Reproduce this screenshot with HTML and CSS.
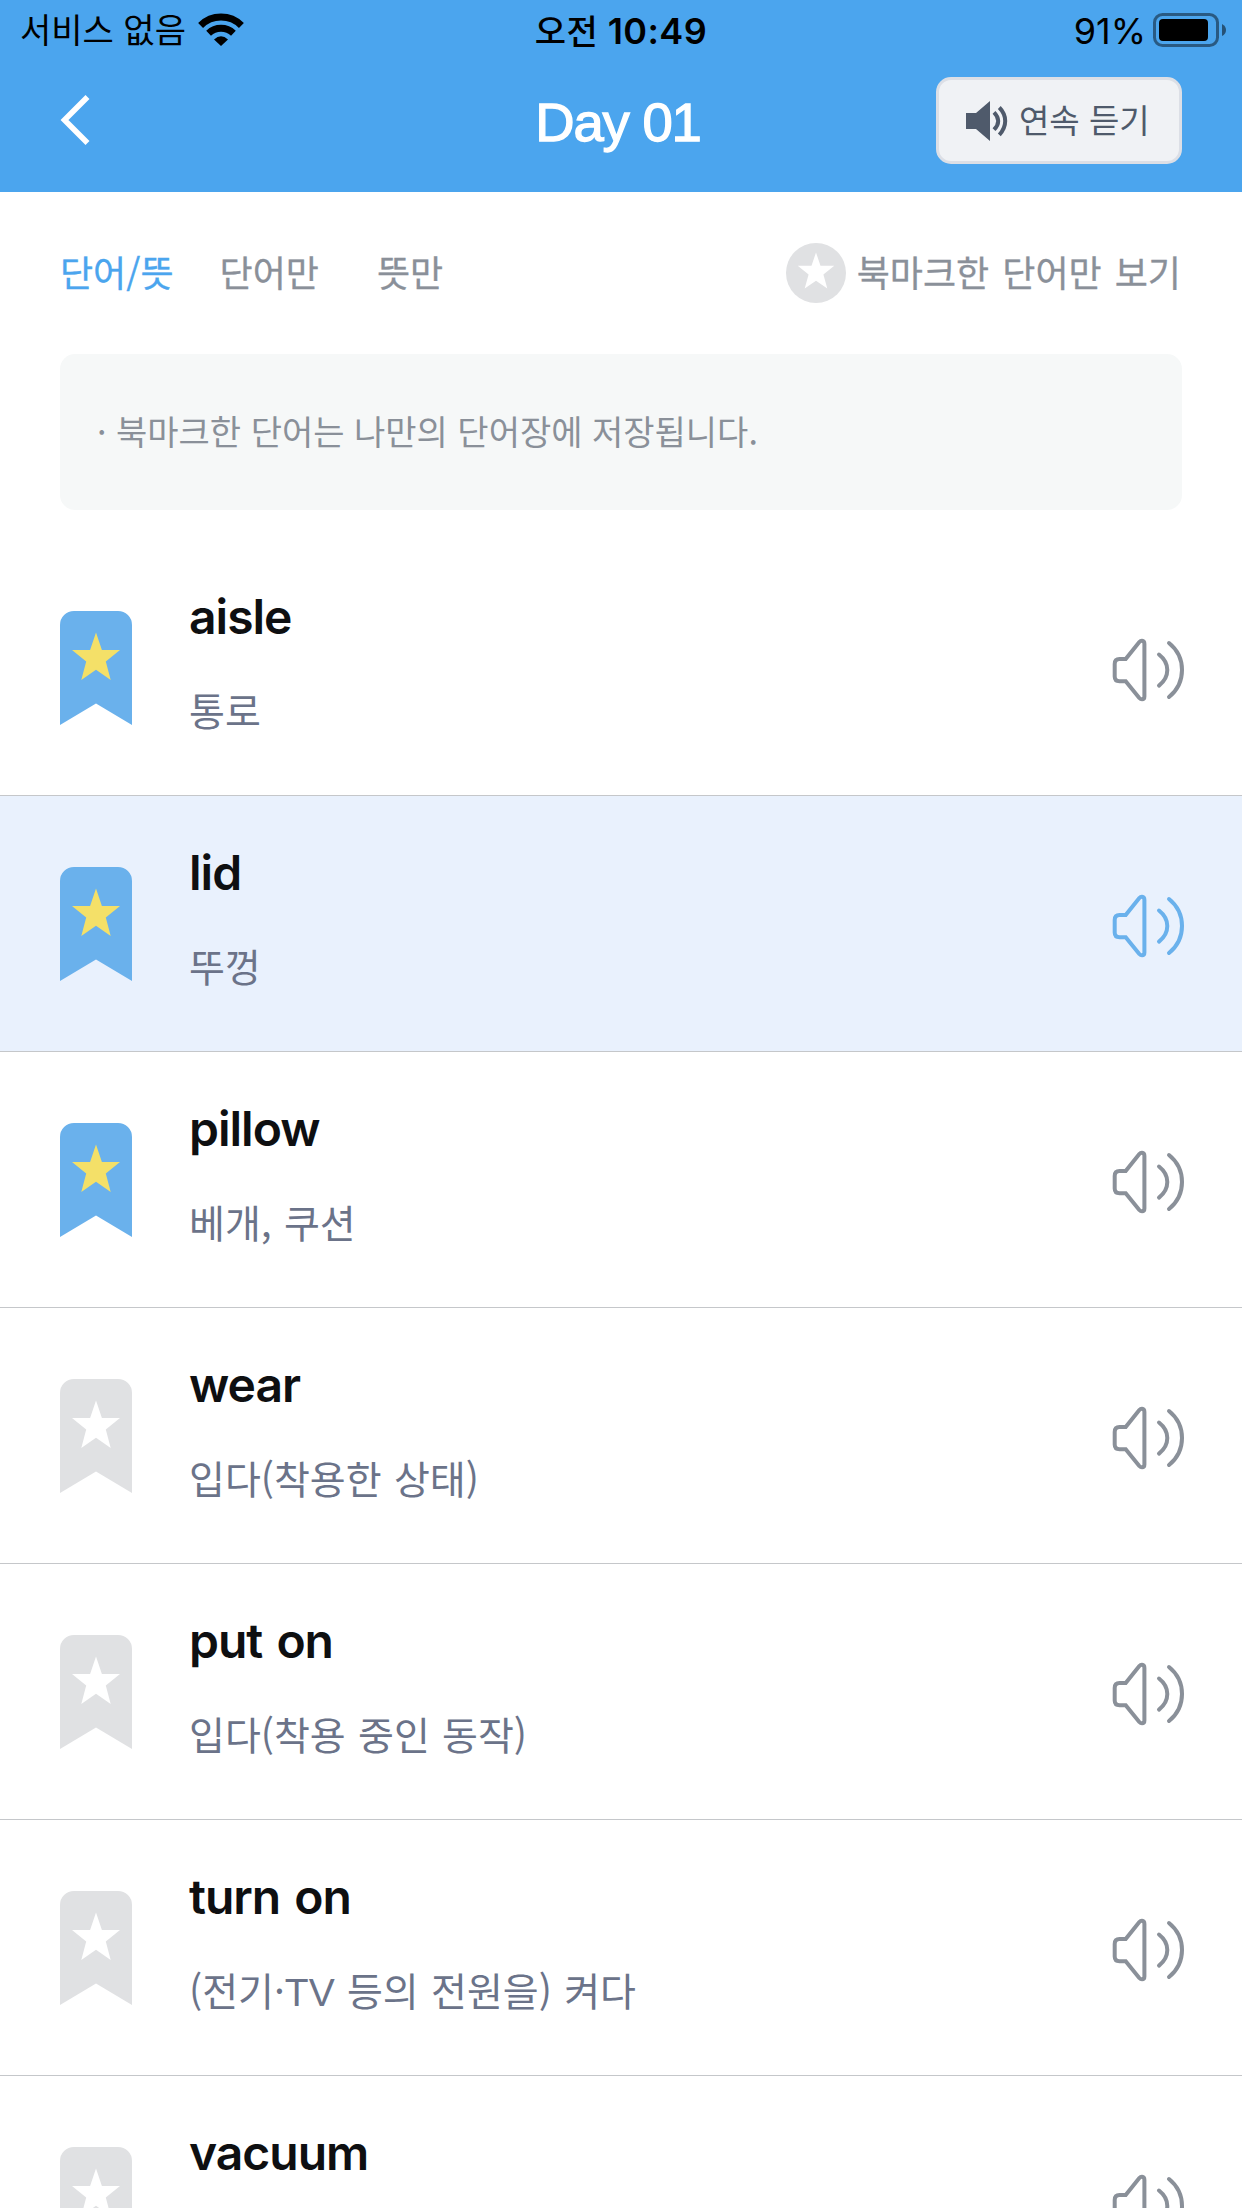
FILE: index.html
```html
<!DOCTYPE html>
<html lang="ko">
<head>
  <meta charset="UTF-8">
  <title>Day 01</title>
  <link rel="stylesheet" href="styles.css">
</head>
<body>

<!-- shared icons -->
<svg class="sprite" width="0" height="0">
  <symbol id="bookmark" viewBox="0 0 72 114">
    <path d="M0 14A14 14 0 0 1 14 0H58A14 14 0 0 1 72 14V114L36 92.6L0 114Z"/>
    <path class="star" d="M36 21.5L41.9 39H60L45.8 50.5L50.7 69L36 58.8L21.3 69L26.2 50.5L12 39H30.1Z"/>
  </symbol>
  <symbol id="speaker" viewBox="0 0 76 68">
    <path d="M15.7 23H9.5Q4.7 23 4.7 28V40.5Q4.7 45.3 9.5 45.3H15.7L29.3 62Q30.5 63.3 32 63.3Q34.4 63.2 34.4 60.5V8Q34.4 5 32 4.8Q30.5 4.7 29.3 6Z"/>
    <path d="M49 18.5Q57.3 25 57.3 34T49 49.6"/>
    <path d="M59 7Q72 17.5 72 34T59 61"/>
  </symbol>
</svg>

<header class="header">
  <div class="status">
    <div class="status-left">
      <span class="carrier">서비스 없음</span>
      <svg class="wifi" width="46" height="34" viewBox="0 0 46 34">
        <path d="M2.6 12.4A29 29 0 0 1 43.4 12.4" fill="none" stroke="#000" stroke-width="7"/>
        <path d="M10.6 20.3A17.8 17.8 0 0 1 35.4 20.3" fill="none" stroke="#000" stroke-width="6.8"/>
        <path d="M16 26.4Q23 20 30 26.4L23 33Z"/>
      </svg>
    </div>
    <div class="time"><span>오전</span> 10:49</div>
    <div class="status-right">
      <span>91%</span>
      <svg class="battery" width="74" height="34" viewBox="0 0 74 34">
        <rect x="1.5" y="1.5" width="63" height="31" rx="8" fill="none" stroke="#000" stroke-opacity=".45" stroke-width="3"/>
        <rect x="6" y="6" width="49" height="22" rx="4"/>
        <path d="M69 11Q73 13 73 17T69 23Z" fill-opacity=".5"/>
      </svg>
    </div>
  </div>
  <div class="nav">
    <svg class="back" width="32" height="54" viewBox="0 0 32 54">
      <path d="M27.5 4L4.5 27L27.5 50" fill="none" stroke="#fff" stroke-width="5.6"/>
    </svg>
    <h1>Day 01</h1>
    <button class="listen">
      <svg width="42" height="40" viewBox="0 0 42 40">
        <path d="M0 12H10L24 0V40L10 28H0Z" fill="#4f5a6b"/>
        <path d="M28 11.3Q32.2 15.5 32.2 20T28 28.7M33.3 6.5Q39.2 12.5 39.2 20T33.3 33.8" fill="none" stroke="#4f5a6b" stroke-width="4"/>
      </svg>
      <span>연속 듣기</span>
    </button>
  </div>
</header>

<div class="filters">
  <div class="tabs">
    <a class="tab active">단어/뜻</a>
    <a class="tab">단어만</a>
    <a class="tab">뜻만</a>
  </div>
  <div class="only-marked">
    <svg width="60" height="60" viewBox="0 0 60 60">
      <circle cx="30" cy="30" r="30" fill="#e0e1e3"/>
      <path d="M30 9.5L34.5 22.8H48.3L37.4 31.5L41.3 45.5L30 37.7L18.7 45.5L22.6 31.5L11.7 22.8H25.5Z" fill="#fff"/>
    </svg>
    <span>북마크한 단어만 보기</span>
  </div>
</div>

<div class="notice">· 북마크한 단어는 나만의 단어장에 저장됩니다.</div>

<ul class="words">
  <li class="row marked">
    <svg class="bookmark"><use href="#bookmark"/></svg>
    <div class="text"><h2>aisle</h2><p>통로</p></div>
    <svg class="speaker"><use href="#speaker"/></svg>
  </li>
  <li class="row marked playing">
    <svg class="bookmark"><use href="#bookmark"/></svg>
    <div class="text"><h2>lid</h2><p>뚜껑</p></div>
    <svg class="speaker"><use href="#speaker"/></svg>
  </li>
  <li class="row marked">
    <svg class="bookmark"><use href="#bookmark"/></svg>
    <div class="text"><h2>pillow</h2><p>베개, 쿠션</p></div>
    <svg class="speaker"><use href="#speaker"/></svg>
  </li>
  <li class="row">
    <svg class="bookmark"><use href="#bookmark"/></svg>
    <div class="text"><h2>wear</h2><p>입다(착용한 상태)</p></div>
    <svg class="speaker"><use href="#speaker"/></svg>
  </li>
  <li class="row">
    <svg class="bookmark"><use href="#bookmark"/></svg>
    <div class="text"><h2>put on</h2><p>입다(착용 중인 동작)</p></div>
    <svg class="speaker"><use href="#speaker"/></svg>
  </li>
  <li class="row">
    <svg class="bookmark"><use href="#bookmark"/></svg>
    <div class="text"><h2>turn on</h2><p>(전기·<span class="latin">TV</span> 등의 전원을) 켜다</p></div>
    <svg class="speaker"><use href="#speaker"/></svg>
  </li>
  <li class="row">
    <svg class="bookmark"><use href="#bookmark"/></svg>
    <div class="text"><h2>vacuum</h2></div>
    <svg class="speaker"><use href="#speaker"/></svg>
  </li>
</ul>

</body>
</html>
```
FILE: styles.css
```css
:root {
  --blue: #4ba5ee;
  --light-blue: #6ab1ec;
  --gray: #8a9099;
  --off: #e0e1e3;
  --line: #c5c7ca;
  --star: #fff;
}
* {
  margin: 0;
  padding: 0;
  box-sizing: border-box;
}
html {
  overflow: hidden;
}
body {
  display: flex;
  flex-direction: column;
  height: 2208px;
  overflow: hidden;
  background: #fff;
  font-family: "Noto Sans CJK KR", sans-serif;
  white-space: nowrap;
}
.sprite {
  display: block;
}
.header {
  flex: none;
  height: 192px;
  background: var(--blue);
}
.status {
  display: grid;
  grid-template-columns: 1fr auto 1fr;
  height: 60px;
  padding: 0 15px 0 20px;
  line-height: 60px;
  color: #000;
}
.status-left,
.status-right {
  display: flex;
  align-items: flex-start;
}
.carrier {
  font-size: 34px;
  line-height: 58px;
}
.wifi {
  margin: 13px 0 0 12px;
}
.time {
  padding-right: 5px;
  font: 600 36px/62px Inter, sans-serif;
  letter-spacing: 0.4px;
}
.time span {
  font: 500 34px/1 "Noto Sans CJK KR", sans-serif;
}
.status-right {
  justify-content: flex-end;
  font: 36px/62px Inter, sans-serif;
}
.battery {
  margin: 13px 0 0 7px;
}
.nav {
  display: grid;
  grid-template-columns: 1fr auto 1fr;
  height: 132px;
  padding: 0 60px;
}
.back {
  margin-top: 33px;
}
.nav h1 {
  padding-right: 6px;
  color: #fff;
  font: 400 54.5px/125px "Liberation Sans", sans-serif;
  letter-spacing: -1.2px;
  -webkit-text-stroke: 1.3px #fff;
}
.listen {
  justify-self: end;
  display: flex;
  align-items: center;
  gap: 11px;
  width: 246px;
  height: 87px;
  margin-top: 17px;
  padding-left: 27px;
  border: 3px solid #dcdfe6;
  border-radius: 15px;
  background: #f0f2f5;
  color: #4f5a6b;
  font: 33px/48px "Noto Sans CJK KR", sans-serif;
}
.listen span {
  padding-bottom: 4px;
}
.filters {
  flex: none;
  display: flex;
  justify-content: space-between;
  height: 162px;
  padding: 51px 61px 0 60px;
  color: var(--gray);
  font-size: 36px;
  line-height: 56px;
  -webkit-text-stroke: 0.3px;
}
.tabs {
  display: flex;
  gap: 46px;
}
.tab.active {
  color: var(--blue);
}
.tab:last-child {
  margin-left: 12px;
}
.only-marked {
  display: flex;
  gap: 11px;
  word-spacing: 3px;
}
.only-marked svg {
  stroke: none;
}
.notice {
  flex: none;
  height: 156px;
  margin: 0 60px 30px;
  padding-left: 37px;
  border-radius: 15px;
  background: #f6f8f8;
  color: var(--gray);
  font-size: 34px;
  line-height: 153px;
}
.words {
  flex: 1;
  min-height: 0;
  overflow: hidden;
  list-style: none;
}
.row {
  display: flex;
  align-items: flex-start;
  height: 256px;
  padding: 0 56px 0 60px;
  border-bottom: 1px solid var(--line);
}
.bookmark {
  width: 72px;
  height: 114px;
  margin-top: 71px;
  fill: var(--off);
}
.star {
  fill: var(--star);
}
.marked {
  --star: #f4e068;
}
.marked .bookmark {
  fill: var(--light-blue);
}
.text {
  flex: 1;
  padding: 48px 0 0 57px;
}
.text h2 {
  color: #0e0f11;
  font: 600 48px/58px Inter, sans-serif;
  letter-spacing: -1px;
  word-spacing: 3px;
}
.text p {
  margin-top: 35px;
  color: #6b7389;
  font-size: 39px;
  line-height: 56px;
  word-spacing: 1.4px;
}
.latin {
  font-family: "Liberation Sans", sans-serif;
  line-height: 1;
}
.speaker {
  width: 76px;
  height: 68px;
  margin-top: 96px;
  fill: none;
  stroke: var(--gray);
  stroke-width: 4;
  stroke-linecap: round;
}
.playing {
  background: #e9f1fd;
}
.playing .speaker {
  stroke: var(--light-blue);
}
```
